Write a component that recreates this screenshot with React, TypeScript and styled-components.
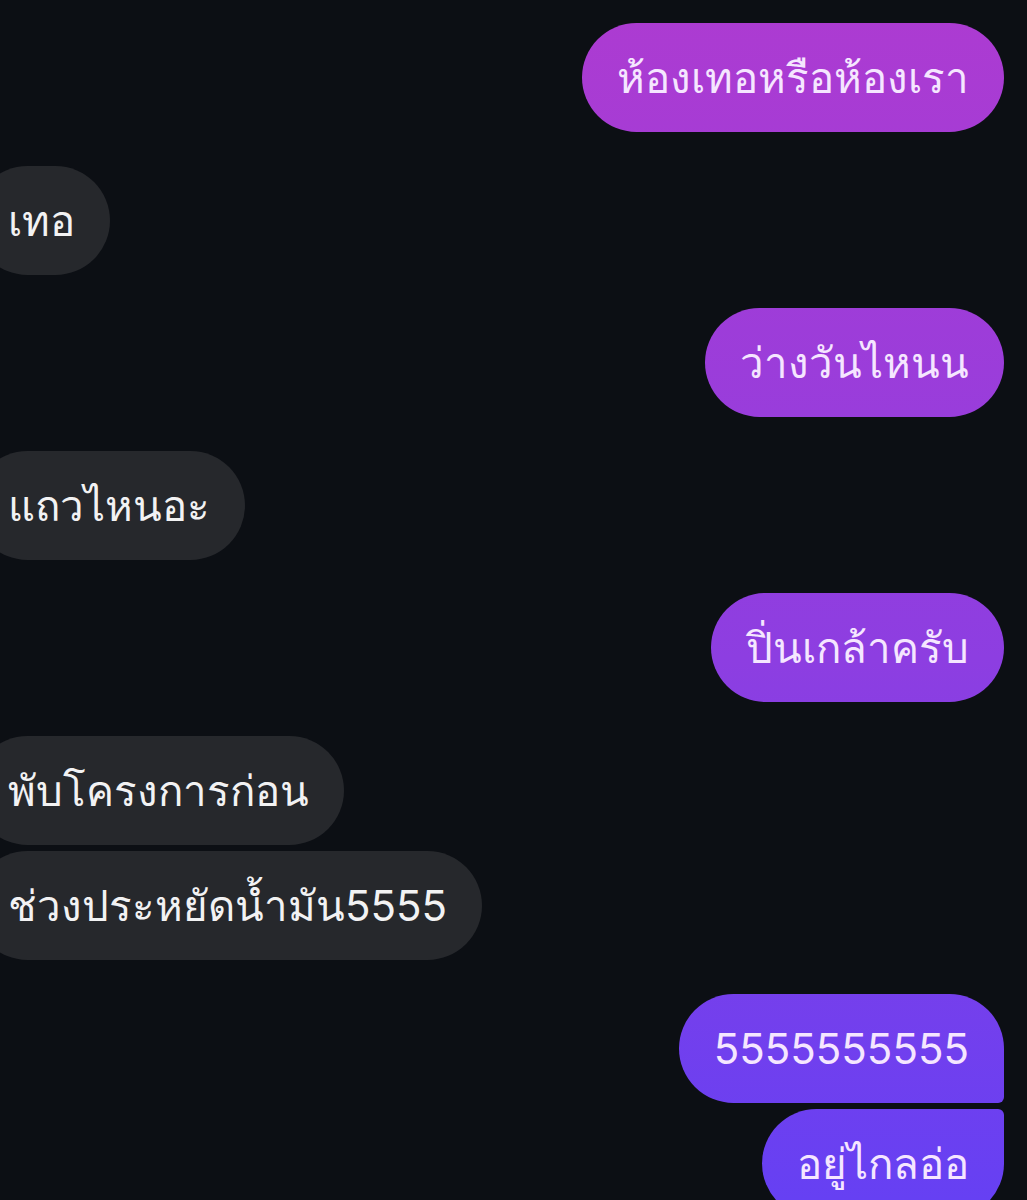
import React from "react";
import styled, { createGlobalStyle, css } from "styled-components";

type Side = "in" | "out";
type Pos = "single" | "first" | "last";

interface Message {
  side: Side;
  text: string;
  pos: Pos;
}

const messages: Message[] = [
  { side: "out", text: "ห้องเทอหรือห้องเรา", pos: "single" },
  { side: "in", text: "เทอ", pos: "single" },
  { side: "out", text: "ว่างวันไหนน", pos: "single" },
  { side: "in", text: "แถวไหนอะ", pos: "single" },
  { side: "out", text: "ปิ่นเกล้าครับ", pos: "single" },
  { side: "in", text: "พับโครงการก่อน", pos: "first" },
  { side: "in", text: "ช่วงประหยัดน้ำมัน5555", pos: "last" },
  { side: "out", text: "5555555555", pos: "first" },
  { side: "out", text: "อยู่ไกลอ่อ", pos: "last" },
];

const GlobalStyle = createGlobalStyle`
  html, body {
    margin: 0;
    padding: 0;
    background: #0c0f14;
    overflow: hidden;
  }
  body {
    font-family: Inter, "Noto Sans", "DejaVu Sans", "Liberation Sans", sans-serif;
  }
`;

const Thread = styled.main`
  display: flex;
  flex-direction: column;
  width: 1027px;
  height: 1200px;
  padding: 23px 23px 0 0;
  box-sizing: border-box;
  background: #0c0f14;
  overflow: hidden;
`;

const Row = styled.div<{ $side: Side; $pos: Pos }>`
  display: flex;
  justify-content: ${(p) => (p.$side === "out" ? "flex-end" : "flex-start")};
  margin-top: ${(p) => (p.$pos === "last" ? "6px" : "33.6px")};

  &:first-child {
    margin-top: 0;
  }
`;

const Bubble = styled.div<{ $side: Side; $pos: Pos }>`
  padding: 26px 35px;
  font-size: 42px;
  line-height: 57px;
  white-space: nowrap;
  border-radius: 55px;

  ${(p) =>
    p.$side === "out"
      ? css`
          color: #f5e6ff;
          background: linear-gradient(180deg, #ad3bd1 0%, #8d3ee1 55%, #6640f3 100%) fixed;
        `
      : css`
          color: #f2f2f3;
          background: #26282c;
          margin-left: -27px;
        `}

  ${(p) =>
    p.$side === "out" && p.$pos === "first" &&
    css`
      border-bottom-right-radius: 6px;
    `}

  ${(p) =>
    p.$side === "out" && p.$pos === "last" &&
    css`
      border-top-right-radius: 6px;
    `}
`;

export default function App() {
  return (
    <>
      <GlobalStyle />
      <Thread>
        {messages.map((m, i) => (
          <Row key={i} $side={m.side} $pos={m.pos}>
            <Bubble $side={m.side} $pos={m.pos}>
              {m.text}
            </Bubble>
          </Row>
        ))}
      </Thread>
    </>
  );
}
